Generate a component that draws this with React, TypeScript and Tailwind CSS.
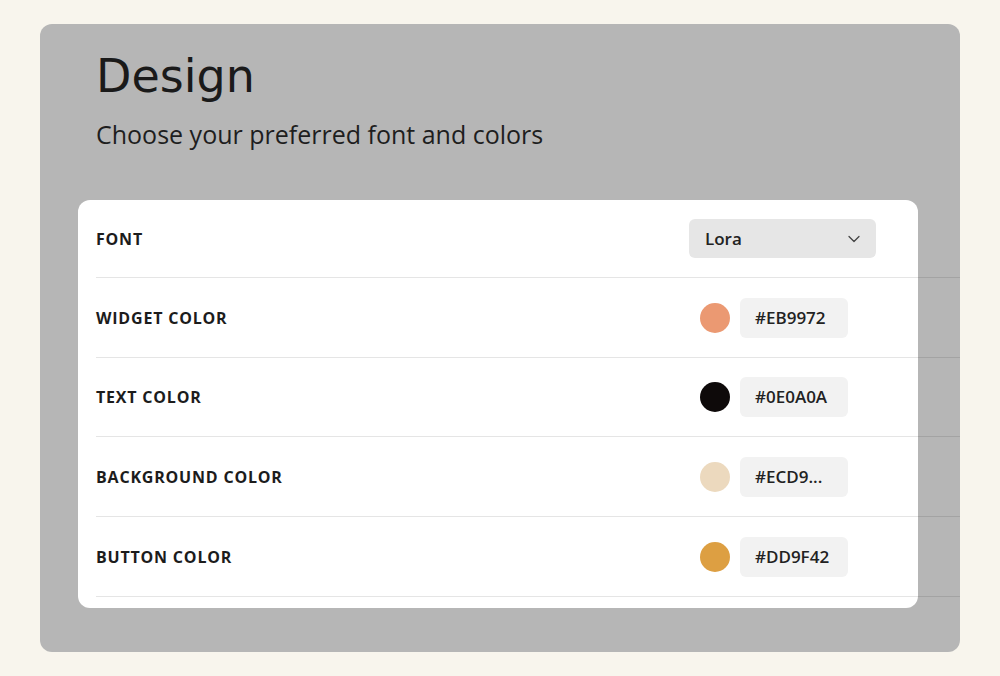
import { ChevronDown } from 'lucide-react'

type ColorRow = { label: string; hex: string; swatch: string; h: string }

const colorRows: ColorRow[] = [
  { label: 'WIDGET COLOR', hex: '#EB9972', swatch: '#EB9972', h: 'h-[80px]' },
  { label: 'TEXT COLOR', hex: '#0E0A0A', swatch: '#0E0A0A', h: 'h-[79px]' },
  { label: 'BACKGROUND COLOR', hex: '#ECD9...', swatch: '#ECD9BE', h: 'h-[80px]' },
  { label: 'BUTTON COLOR', hex: '#DD9F42', swatch: '#DD9F42', h: 'h-[80px]' },
]

function Label({ children }: { children: string }) {
  return (
    <span className="text-[16px] font-bold tracking-[0.05em] text-[#1c1c1c]">{children}</span>
  )
}

export default function App() {
  return (
    <div className="min-h-screen w-full bg-[#f8f5ed] pt-6 px-10 font-['Open_Sans',sans-serif]">
      <div className="h-[628px] w-[920px] rounded-xl bg-[#b6b6b6] overflow-hidden">
        {/* Header */}
        <div className="px-14 pt-[22px]">
          <h1 className="font-['DejaVu_Sans',sans-serif] text-[46px] font-normal leading-[60px] text-[#1a1a1a]">
            Design
          </h1>
          <p className="mt-[11px] text-[25px] leading-[34px] text-[#1e1e1e]">
            Choose your preferred font and colors
          </p>
        </div>

        {/* Settings card */}
        <div className="ml-[38px] mt-[49px] w-[840px] rounded-xl bg-white pl-[18px] pb-[11px]">
          <div className="w-[864px]">
            <div className="flex h-[78px] items-center border-b border-black/10">
              <div className="flex-1">
                <Label>FONT</Label>
              </div>
              <div className="w-[271px]">
                <div className="flex h-[39px] w-[187px] items-center justify-between rounded-md bg-[#e6e6e6] pl-4 pr-[12px]">
                  <span className="text-[17px] font-semibold text-[#222]">Lora</span>
                  <ChevronDown size={20} strokeWidth={1.5} className="text-[#444]" />
                </div>
              </div>
            </div>
            {colorRows.map((row) => (
              <div key={row.label} className={`flex ${row.h} items-center border-b border-black/10`}>
                <div className="flex-1">
                  <Label>{row.label}</Label>
                </div>
                <div className="flex w-[271px] items-center gap-[10px] pl-[11px]">
                  <span
                    className="h-[30px] w-[30px] rounded-full"
                    style={{ backgroundColor: row.swatch }}
                  />
                  <div className="flex h-[40px] w-[108px] items-center rounded-md bg-[#f2f2f2] pl-[15px]">
                    <span className="text-[17px] font-semibold text-[#222]">{row.hex}</span>
                  </div>
                </div>
              </div>
            ))}
          </div>
        </div>
      </div>
    </div>
  )
}
